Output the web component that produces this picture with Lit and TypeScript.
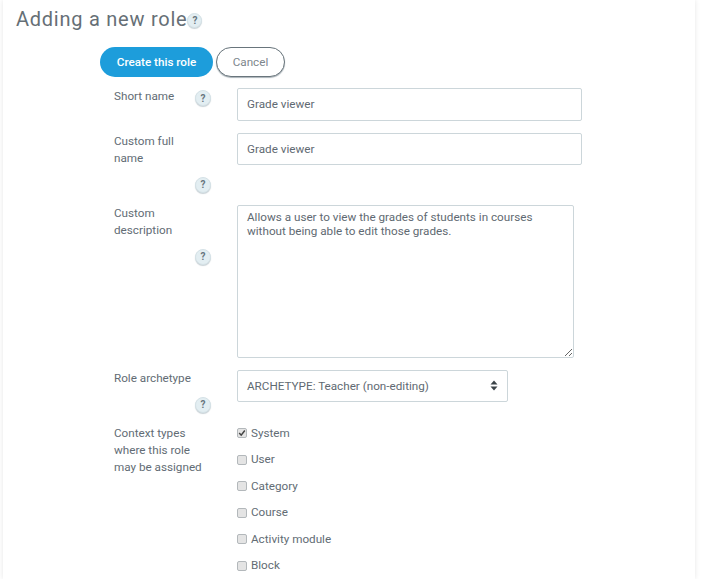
import { LitElement, html, css } from "lit";
import { customElement } from "lit/decorators.js";

const help = () => html`<span class="help">?</span>`;

@customElement("app-root")
export class AppRoot extends LitElement {
  static styles = css`
    :host { display: block; width: 726px; height: 579px; overflow: hidden; background: #fff; font-family: Roboto, "Liberation Sans", sans-serif; font-size: 11.7px; color: #626c74; }
    .card { box-sizing: border-box; width: 692px; height: 579px; margin-left: 3px; background: #fff; box-shadow: 0 0 5px rgba(0,0,0,.1); padding: 4px 0 0 13px; overflow: hidden; }
    h1 { display: flex; align-items: center; margin: 0; font-size: 20px; line-height: 30px; font-weight: 400; letter-spacing: 0.75px; color: #666f76; }
    .help { display: inline-flex; flex: none; align-items: center; justify-content: center; box-sizing: border-box; width: 16px; height: 16px; border-radius: 50%; background: #e3eef2; border: 1px solid #d5e2e7; box-shadow: 0 1px 1px #c9d2d6; font-size: 10px; font-weight: 700; color: #67757d; letter-spacing: 0; }
    h1 .help { width: 15px; height: 15px; margin-top: 3px; }
    .actions { display: flex; gap: 3px; margin: 13px 0 0 84px; height: 30px; }
    .btn { box-sizing: border-box; height: 30px; border-radius: 15px; font: 500 11.7px/28px Roboto, sans-serif; padding: 0; text-align: center; }
    .primary { width: 113px; background: #1d9ddb; color: #fff; border: 0; }
    .secondary { width: 69px; background: #fff; color: #7d868c; border: 1px solid #69757c; font-weight: 400; box-shadow: 0 1px 1px #aab3b8; }
    form { margin: 11px 0 0 98px; display: flex; flex-direction: column; gap: 12px; }
    .row { display: grid; grid-template-columns: 97px 1fr; column-gap: 26px; }
    .side { display: flex; flex-wrap: wrap; align-content: flex-start; }
    .label { line-height: 17px; }
    .wide { width: 82px; }
    .slot { margin-left: auto; padding-left: 10px; display: flex; }
    .row.first .slot { padding-top: 2px; }
    .stack .slot { padding-top: 10px; }
    input.text, textarea, .select { box-sizing: border-box; border: 1px solid #ccd6da; border-radius: 2px; background: #fff; font: 11.7px Roboto, sans-serif; color: #5f6a72; outline: 0; }
    input.text { display: block; width: 345px; height: 32.6px; padding: 0 9px; }
    textarea { display: block; width: 337px; height: 153px; padding: 4.5px 9px; line-height: 14px; margin: 0; }
    .select { display: flex; align-items: center; justify-content: space-between; width: 271px; height: 32px; padding: 0 9px; }
    .select svg { display: block; }
    .checks { display: flex; flex-direction: column; gap: 9.5px; }
    .check { display: flex; align-items: center; gap: 4px; height: 17px; line-height: 17px; }
    .box { box-sizing: border-box; width: 10px; height: 10px; flex: none; border: 1px solid #b3b8bb; border-radius: 2px; background: #e4e4e4; display: flex; }
    .box svg { display: block; }
  `;

  render() {
    const opts = ["System", "User", "Category", "Course", "Activity module", "Block"];
    return html`<div class="card">
      <h1>Adding a new role${help()}</h1>
      <div class="actions">
        <button class="btn primary" type="button">Create this role</button>
        <button class="btn secondary" type="button">Cancel</button>
      </div>
      <form>
        <div class="row first">
          <div class="side"><span class="label">Short name</span><span class="slot">${help()}</span></div>
          <input class="text" value="Grade viewer" />
        </div>
        <div class="row stack">
          <div class="side"><span class="label wide">Custom full name</span><span class="slot">${help()}</span></div>
          <input class="text" value="Grade viewer" />
        </div>
        <div class="row stack">
          <div class="side"><span class="label wide">Custom description</span><span class="slot">${help()}</span></div>
          <textarea>Allows a user to view the grades of students in courses without being able to edit those grades.</textarea>
        </div>
        <div class="row stack">
          <div class="side"><span class="label">Role archetype</span><span class="slot">${help()}</span></div>
          <div class="select"><span>ARCHETYPE: Teacher (non-editing)</span>
            <svg width="8" height="11" viewBox="0 0 8 11"><path d="M4 0.5 7.5 4.5H.5zM4 10.5.5 6.5h7z" fill="#3b4348"/></svg>
          </div>
        </div>
        <div class="row">
          <div class="side"><span class="label">Context types where this role may be assigned</span></div>
          <div class="checks">
            ${opts.map((o, i) => html`<div class="check"><span class="box">${i === 0 ? html`<svg width="8" height="8" viewBox="0 0 8 8"><path d="M1.2 4 3.2 6.2 6.8 1.5" fill="none" stroke="#444" stroke-width="1.5"/></svg>` : ""}</span><span>${o}</span></div>`)}
          </div>
        </div>
      </form>
    </div>`;
  }
}
